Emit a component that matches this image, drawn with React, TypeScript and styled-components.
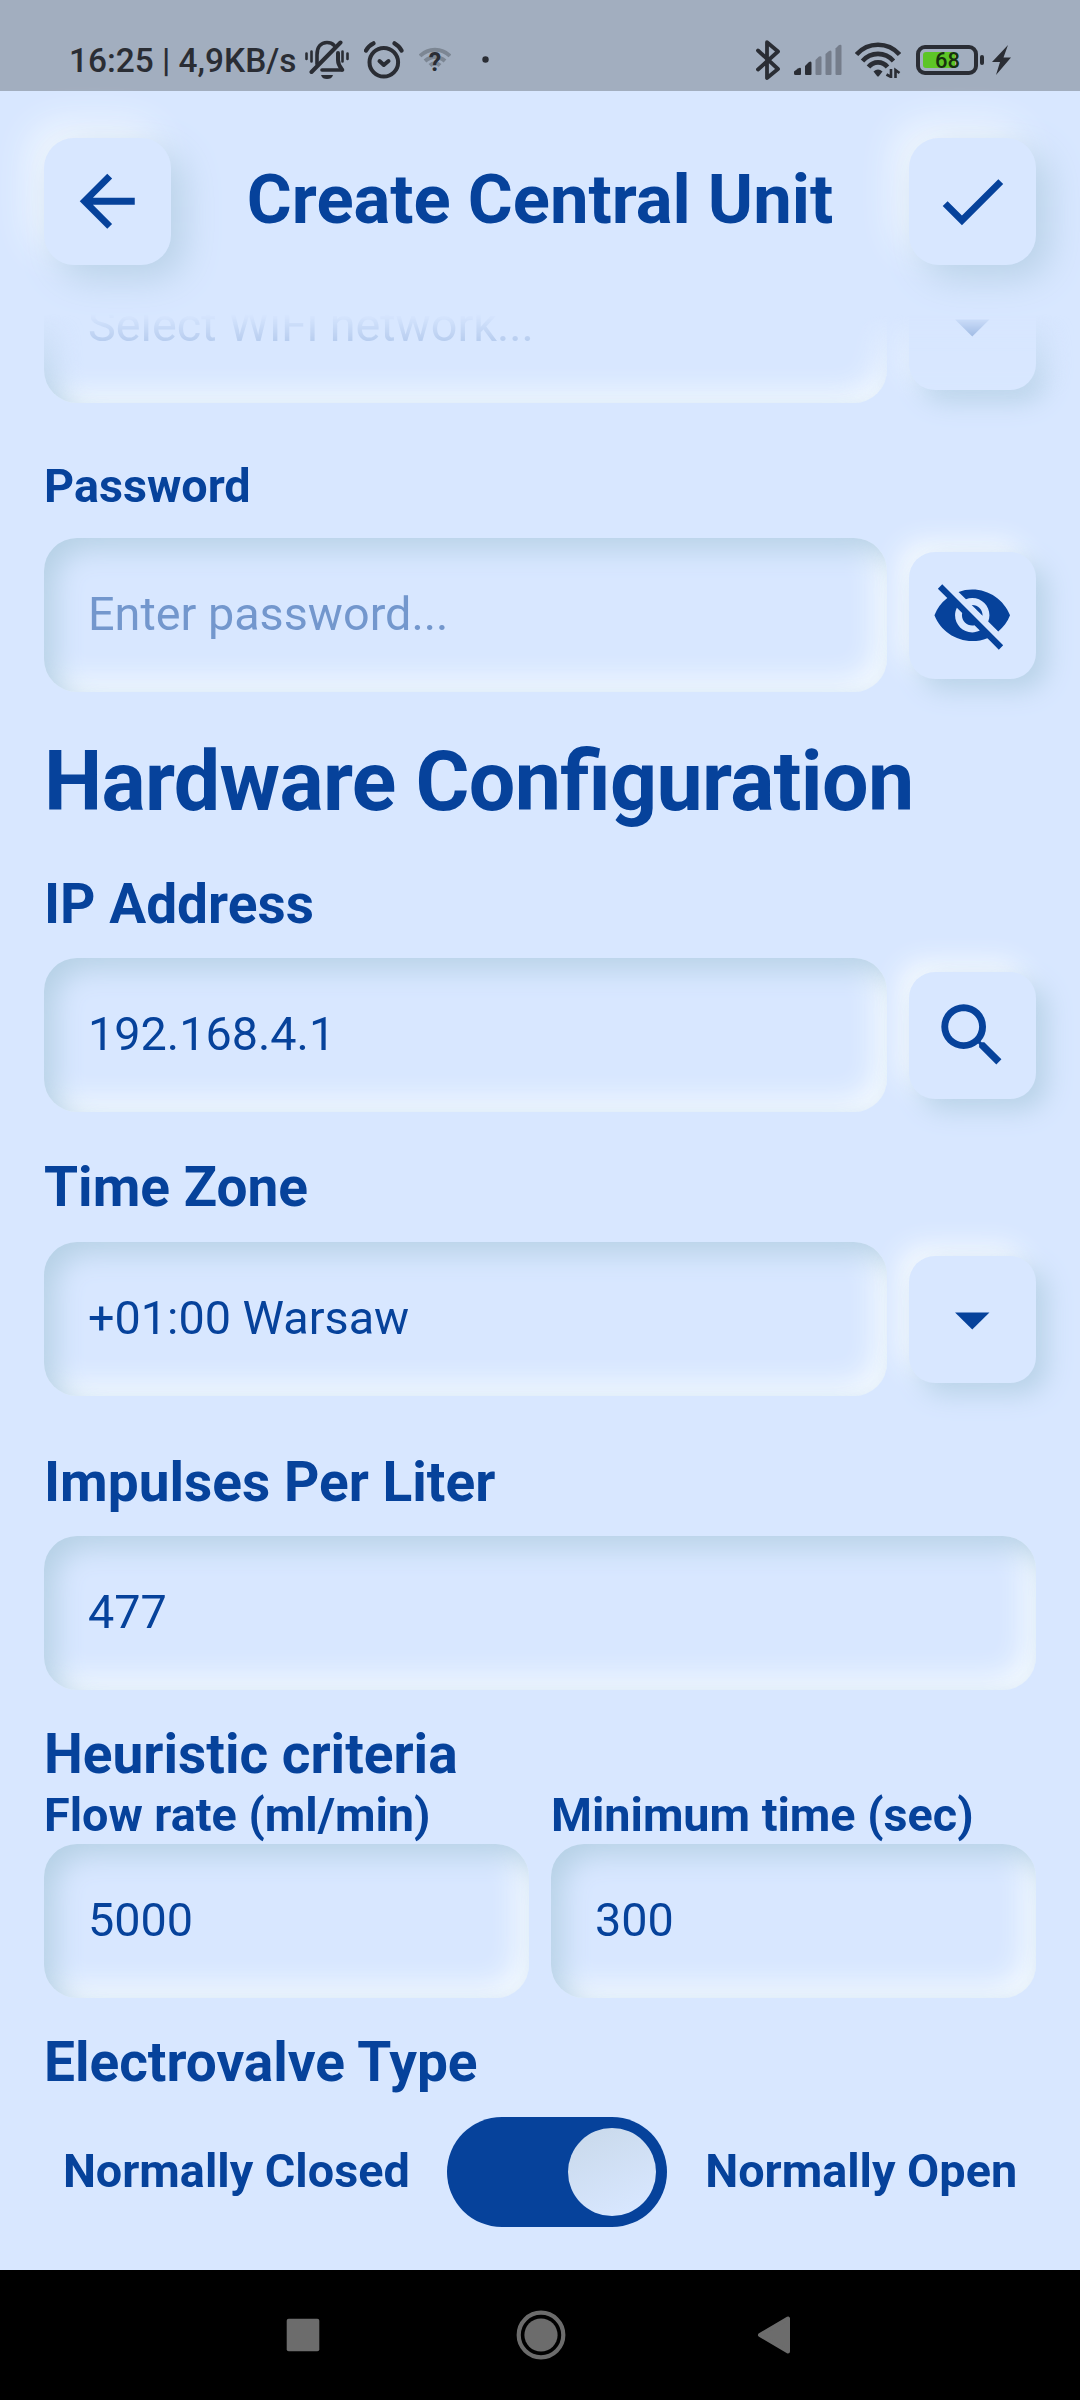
import React from "react";
import styled, { createGlobalStyle } from "styled-components";
import {
  MdArrowBack,
  MdArrowDropDown,
  MdCheck,
  MdSearch,
  MdVisibilityOff,
} from "react-icons/md";

const GlobalStyle = createGlobalStyle`
  * { box-sizing: border-box; }
  body {
    margin: 0;
    background: #d8e7ff;
    font-family: Roboto, "Liberation Sans", sans-serif;
  }
`;

const ink = "#06429b";
const surface = "#d8e7ff";

const Screen = styled.div`
  display: flex;
  flex-direction: column;
  width: 1080px;
  height: 2400px;
  overflow: hidden;
  background: ${surface};
  color: ${ink};
`;

const StatusBar = styled.div`
  display: flex;
  align-items: center;
  height: 91px;
  flex: none;
  padding: 28px 69px 0 69px;
  background: #a2aebf;
  color: #2a2d34;
`;

const StatusText = styled.span`
  width: 236px;
  padding-top: 2px;
  font-size: 33.4px;
  line-height: 40px;
  font-weight: 500;
  white-space: nowrap;
`;

const Glyph = styled.svg<{ $gap?: number }>`
  display: block;
  flex: none;
  margin-left: ${(p) => p.$gap ?? 0}px;
`;

const StatusSpacer = styled.div`
  flex: 1;
`;

const Header = styled.header`
  display: flex;
  align-items: center;
  justify-content: space-between;
  flex: none;
  height: 219px;
  padding: 1px 44px 0;
`;

const Title = styled.h1`
  margin: 0;
  font-size: 68.75px;
  line-height: 80px;
  font-weight: 700;
  white-space: nowrap;
  padding-bottom: 2px;
`;

const IconButton = styled.button<{ $header?: boolean }>`
  display: flex;
  align-items: center;
  justify-content: center;
  flex: none;
  width: 127px;
  height: 127px;
  padding: 0;
  border: none;
  border-radius: ${(p) => (p.$header ? 30 : 26)}px;
  background: ${surface};
  color: ${ink};
  font-size: 82.5px;
  box-shadow: ${(p) =>
    p.$header
      ? "13px 13px 36px #b8d1e8, -13px -13px 36px #f4f9fe"
      : "11px 11px 26px #b8d2e8, -11px -11px 26px #f4f9fe"};
`;

const Content = styled.main`
  display: flex;
  flex-direction: column;
  flex: none;
  height: 1960px;
  padding: 0 44px;
  overflow: hidden;
  mask-image: linear-gradient(to bottom, transparent 4px, #000 90px);
`;

const FieldRow = styled.div<{ $top?: number }>`
  display: flex;
  align-items: center;
  flex: none;
  gap: 22px;
  margin-top: ${(p) => p.$top ?? 0}px;
`;

const Field = styled.div<{ $muted?: boolean }>`
  display: flex;
  align-items: center;
  flex: 1;
  height: 154px;
  padding: 0 44px 1px;
  border-radius: 33px;
  font-size: 46.75px;
  line-height: 55px;
  white-space: nowrap;
  color: ${(p) => (p.$muted ? "#7397cd" : ink)};
  box-shadow: inset 11px 11px 28px #b5d0e6, inset -11px -11px 28px #f6fbff;
`;

const SectionTitle = styled.h2`
  margin: 41px 0 0;
  font-size: 82.5px;
  line-height: 97px;
  font-weight: 700;
  letter-spacing: -0.67px;
  font-feature-settings: "liga" 1;
  white-space: nowrap;
`;

const Label = styled.h3<{ $top: number }>`
  margin: ${(p) => p.$top}px 0 0;
  font-size: 55px;
  line-height: 64px;
  font-weight: 700;
  white-space: nowrap;
`;

const SmallLabel = styled.h4<{ $top?: number }>`
  margin: ${(p) => p.$top ?? 0}px 0 0;
  font-size: 46.75px;
  line-height: 55px;
  font-weight: 700;
  white-space: nowrap;
`;

const PairRow = styled.div`
  display: grid;
  grid-template-columns: 1fr 1fr;
  column-gap: 22px;
  margin-top: 2px;
`;

const PairCell = styled.div`
  display: flex;
  flex-direction: column;
  gap: 1px;
`;

const PairField = styled(Field)`
  flex: none;
`;

const ToggleRow = styled.div`
  display: flex;
  align-items: center;
  justify-content: space-around;
  margin-top: 22.5px;
`;

const Toggle = styled.div`
  display: flex;
  justify-content: flex-end;
  width: 220px;
  height: 110px;
  padding: 11px;
  border-radius: 55px;
  background: ${ink};
`;

const Knob = styled.div`
  width: 88px;
  height: 88px;
  border-radius: 50%;
  background: linear-gradient(155deg, #c9d9eb 5%, #d8e7ff 90%);
`;

const NavBar = styled.nav`
  display: flex;
  align-items: center;
  justify-content: space-between;
  flex: none;
  height: 130px;
  padding: 0 289px 0 286px;
  background: #000;
`;

function BellOffIcon() {
  return (
    <Glyph width="44" height="40" viewBox="0 0 44 40" fill="none" stroke="currentColor" strokeLinecap="round">
      <path d="M12 24V15C12 7 16 2.5 22 2.5c3 0 5.400 1 7 2.700" strokeWidth="3.600" />
      <path d="M35.500 2.500L6.500 32" strokeWidth="4" />
      <path d="M33 13V20C33 24 34.500 26.500 37 29.500" strokeWidth="4" />
      <path d="M17 30H37.500" strokeWidth="3.600" />
      <path d="M16 35H28C27 38 25 39 22 39S17 38 16 35Z" fill="currentColor" stroke="none" />
      <path d="M1.500 13.500V19M6.500 11.500V21.500M37.500 11.500V21.500M42.500 13.500V19" strokeWidth="2.600" />
    </Glyph>
  );
}

function AlarmIcon() {
  return (
    <Glyph $gap={15} width="40" height="38" viewBox="0 0 40 38" fill="none" stroke="currentColor" strokeLinecap="round">
      <circle cx="19.800" cy="21.300" r="14.300" strokeWidth="4" />
      <path d="M15.500 20L19.800 24L24.500 20" strokeWidth="4" strokeLinejoin="round" />
      <path d="M2 9.500C3.500 6.500 6 4 9.500 2.300M30.500 2.300C33.500 4 36 6.500 37.500 9.500" strokeWidth="4.200" />
    </Glyph>
  );
}

const WifiQuestion = styled.div`
  display: grid;
  place-items: center;
  flex: none;
  width: 32px;
  height: 32px;
  margin-left: 15px;

  & > * {
    grid-area: 1 / 1;
  }
`;

const QuestionMark = styled.span`
  font-size: 25px;
  line-height: 25px;
  font-weight: 700;
  padding-top: 5px;
`;

function WifiUnknownIcon() {
  return (
    <WifiQuestion>
      <Glyph width="32" height="32" viewBox="0 0 32 32" fill="none" stroke="#7c8693" strokeWidth="4">
        <path d="M1 12C9 3.500 23 3.500 31 12M6 17C12 11.500 20 11.500 26 17M11 21.500C14 18.500 18 18.500 21 21.500" />
      </Glyph>
      <QuestionMark>?</QuestionMark>
    </WifiQuestion>
  );
}

function BluetoothIcon() {
  return (
    <Glyph width="25" height="40" viewBox="0 0 25 40" fill="none" stroke="currentColor" strokeWidth="3.800" strokeLinecap="round" strokeLinejoin="round">
      <path d="M2 10.500L22 29L11 38V2.200L22 11.500L2 29.500" />
    </Glyph>
  );
}

function SignalIcon() {
  return (
    <Glyph $gap={13} width="48" height="32" viewBox="0 0 48 32" fill="currentColor">
      <path d="M0 27.500L4 24.500Q7 23 7 25V30Q7 31 6 31H1.500Q0 31 0 29.500Z" />
      <path d="M11 22L15 18Q17.500 16.500 17.500 19V30Q17.500 31 16.500 31H12Q11 31 11 30Z" />
      <g fill="#757d8b">
        <path d="M21.500 16L25 12.500Q27.500 11.500 27.500 13.500V30Q27.500 31 26.500 31H22.500Q21.500 31 21.500 30Z" />
        <path d="M31.500 10L35 7Q37.500 5.500 37.500 8V30Q37.500 31 36.500 31H32.500Q31.500 31 31.500 30Z" />
        <path d="M41.500 4.500L45 1Q47.500 0 47.500 2V30Q47.500 31 46.500 31H42.500Q41.500 31 41.500 30Z" />
      </g>
    </Glyph>
  );
}

function WifiIcon() {
  return (
    <Glyph $gap={13} width="46" height="36" viewBox="0 0 46 36" fill="none" stroke="currentColor" strokeWidth="4.600">
      <path d="M1.500 12.500C13 -.5 33 -.5 44.500 12.500" />
      <path d="M7.500 19C16 9.500 30 9.500 38.500 19" />
      <path d="M13.500 25C18.500 18.800 27.500 18.800 32.500 25" />
      <path d="M18.500 29.500Q23 25.500 27.500 29.500L24 34Q23 35 22 34Z" fill="currentColor" stroke="none" />
      <path d="M36 27V35L31.500 32.500M40.500 36V28L44.500 31" strokeWidth="2.600" />
    </Glyph>
  );
}

const Battery = styled.div`
  display: flex;
  align-items: center;
  flex: none;
  width: 62px;
  height: 30px;
  margin-left: 15px;
  padding: 3px;
  border: 4px solid #2a2d34;
  border-radius: 9px;
`;

const BatteryLevel = styled.div`
  display: flex;
  align-items: center;
  width: 32px;
  height: 16px;
  padding: 2px 0 0 12px;
  border-radius: 3px;
  background: #5dc526;
  color: #17300f;
  font-size: 22px;
  line-height: 16px;
  font-weight: 500;
`;

const BatteryTip = styled.div`
  width: 4px;
  height: 10px;
  margin-left: 2px;
  border-radius: 2px;
  background: #2a2d34;
`;

export default function App() {
  return (
    <Screen>
      <GlobalStyle />
      <StatusBar>
        <StatusText>16:25 | 4,9KB/s</StatusText>
        <BellOffIcon />
        <AlarmIcon />
        <WifiUnknownIcon />
        <Glyph $gap={31} width="7" height="7" viewBox="0 0 7 7">
          <circle cx="3.500" cy="3.500" r="3.200" fill="currentColor" />
        </Glyph>
        <StatusSpacer />
        <BluetoothIcon />
        <SignalIcon />
        <WifiIcon />
        <Battery>
          <BatteryLevel>68</BatteryLevel>
        </Battery>
        <BatteryTip />
        <Glyph $gap={8} width="19" height="30" viewBox="0 0 19 30" fill="currentColor">
          <path d="M16 0L0 17H8L4 30L19 12.500H11.500Z" />
        </Glyph>
      </StatusBar>

      <Header>
        <IconButton $header aria-label="Back">
          <MdArrowBack />
        </IconButton>
        <Title>Create Central Unit</Title>
        <IconButton $header aria-label="Confirm">
          <MdCheck />
        </IconButton>
      </Header>

      <Content>
        <FieldRow $top={-61}>
          <Field $muted>Select WiFi network...</Field>
          <IconButton aria-label="Choose network">
            <MdArrowDropDown />
          </IconButton>
        </FieldRow>

        <SmallLabel $top={56}>Password</SmallLabel>
        <FieldRow $top={24}>
          <Field $muted>Enter password...</Field>
          <IconButton aria-label="Show password">
            <MdVisibilityOff />
          </IconButton>
        </FieldRow>

        <SectionTitle>Hardware Configuration</SectionTitle>

        <Label $top={42}>IP Address</Label>
        <FieldRow $top={22.25}>
          <Field>192.168.4.1</Field>
          <IconButton aria-label="Search">
            <MdSearch />
          </IconButton>
        </FieldRow>

        <Label $top={42.75}>Time Zone</Label>
        <FieldRow $top={23}>
          <Field>+01:00 Warsaw</Field>
          <IconButton aria-label="Choose time zone">
            <MdArrowDropDown />
          </IconButton>
        </FieldRow>

        <Label $top={54}>Impulses Per Liter</Label>
        <FieldRow $top={22}>
          <Field>477</Field>
        </FieldRow>

        <Label $top={32}>Heuristic criteria</Label>
        <PairRow>
          <PairCell>
            <SmallLabel>Flow rate (ml/min)</SmallLabel>
            <PairField>5000</PairField>
          </PairCell>
          <PairCell>
            <SmallLabel>Minimum time (sec)</SmallLabel>
            <PairField>300</PairField>
          </PairCell>
        </PairRow>

        <Label $top={32}>Electrovalve Type</Label>
        <ToggleRow>
          <SmallLabel>Normally Closed</SmallLabel>
          <Toggle>
            <Knob />
          </Toggle>
          <SmallLabel>Normally Open</SmallLabel>
        </ToggleRow>
      </Content>

      <NavBar>
        <Glyph width="34" height="34" viewBox="0 0 34 34">
          <rect x=".7" y=".7" width="32.600" height="32.600" rx="2" fill="#6c6c6c" />
        </Glyph>
        <Glyph $gap={4} width="50" height="50" viewBox="0 0 50 50">
          <circle cx="25" cy="25" r="22.300" fill="none" stroke="#6c6c6c" strokeWidth="4.200" />
          <circle cx="25" cy="25" r="16.600" fill="#6c6c6c" />
        </Glyph>
        <Glyph width="34" height="38" viewBox="0 0 34 38">
          <path d="M3 19L31 2.500V35.500Z" fill="#6c6c6c" stroke="#6c6c6c" strokeWidth="4" strokeLinejoin="round" />
        </Glyph>
      </NavBar>
    </Screen>
  );
}
